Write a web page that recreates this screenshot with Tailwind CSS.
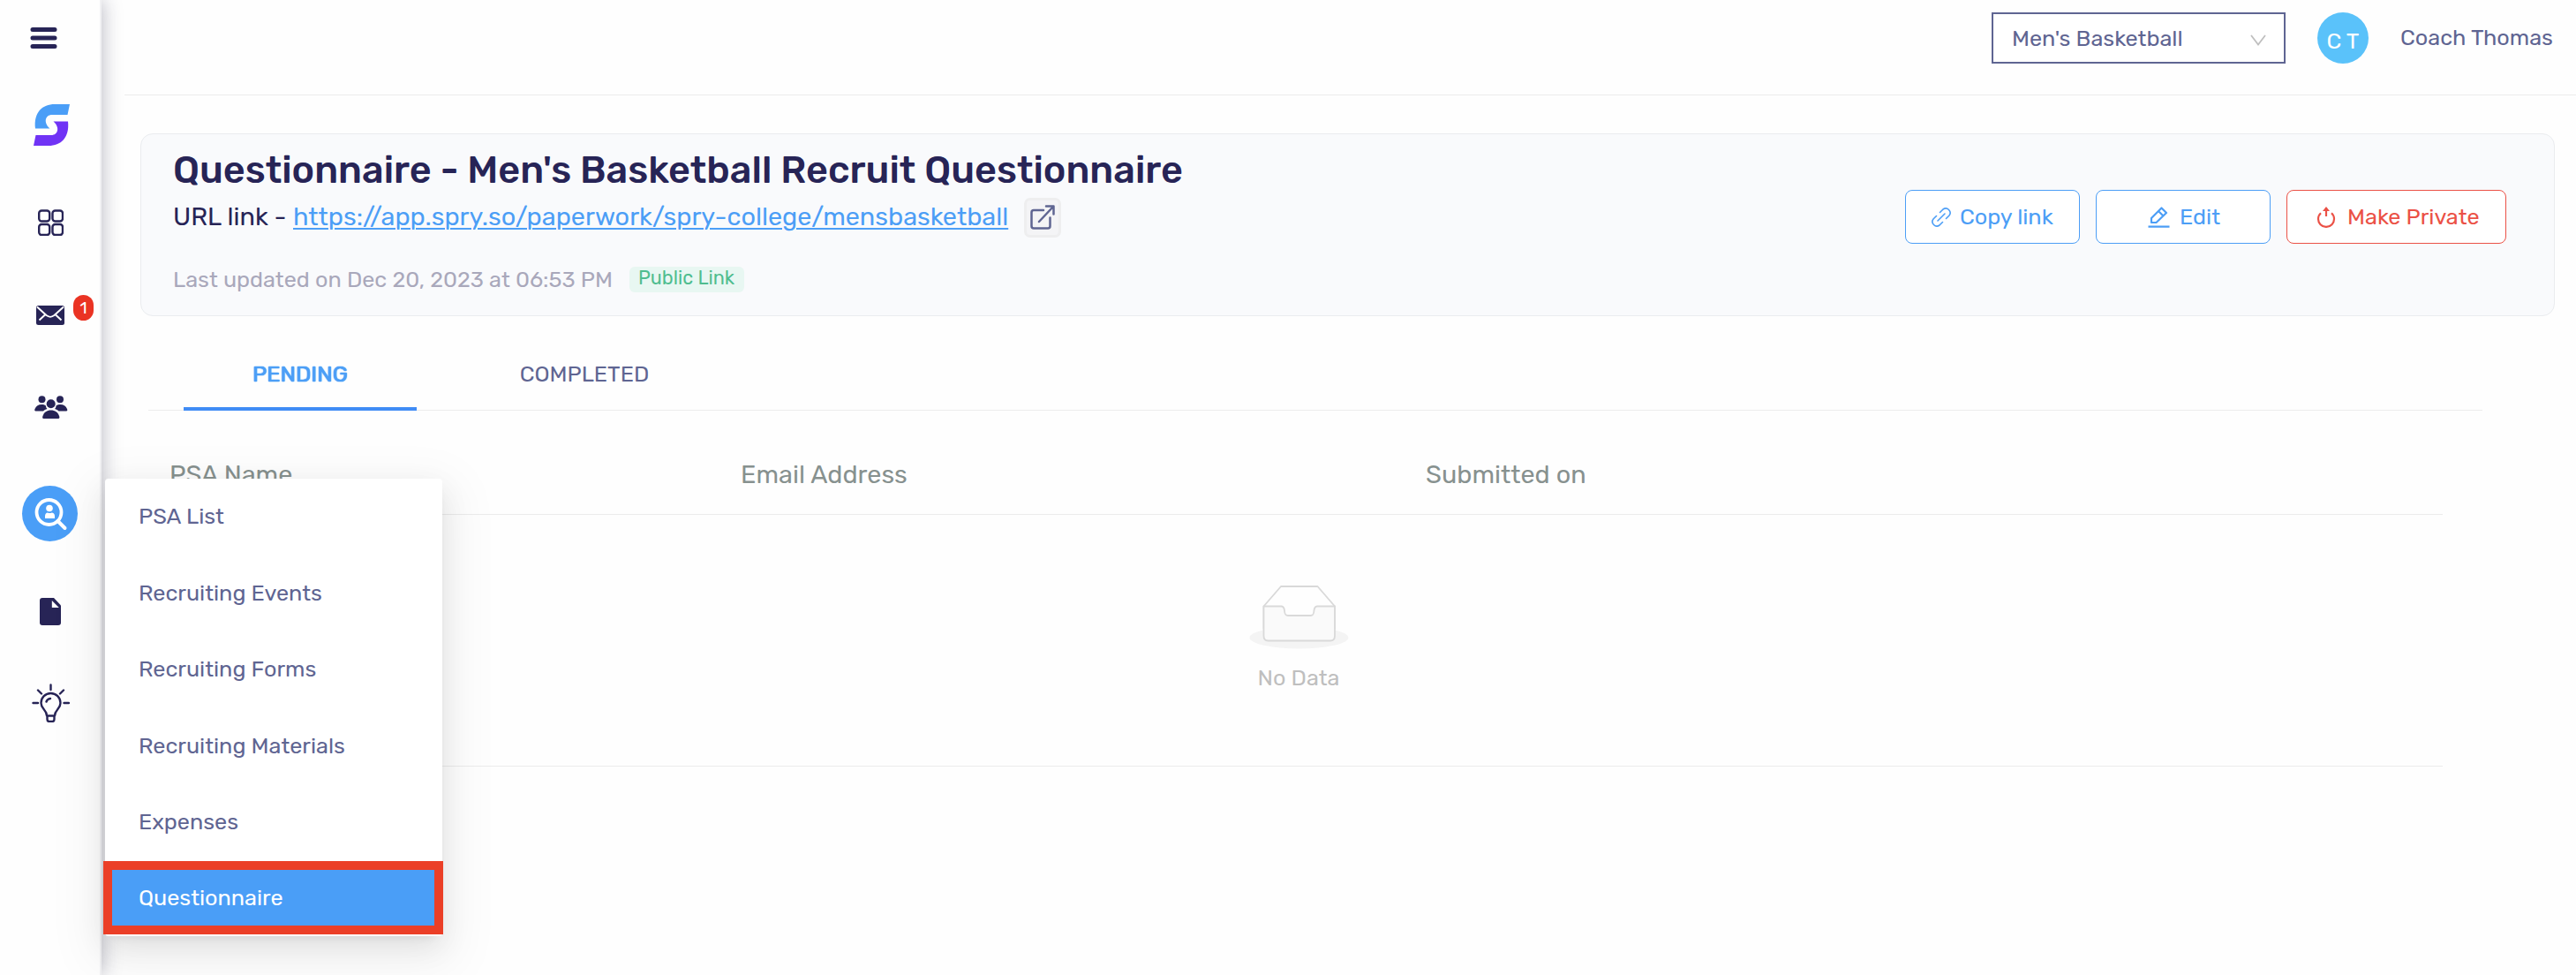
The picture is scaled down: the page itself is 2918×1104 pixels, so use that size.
<!DOCTYPE html>
<html lang="en">
<head>
    <meta charset="UTF-8">
    <title>Questionnaire</title>
    <script src="https://cdn.jsdelivr.net/npm/@tailwindcss/browser@4"></script>
</head>
<body class="relative flex w-[2918px] h-[1104px] overflow-hidden bg-[#fefefe] font-[Rubik,Roboto,sans-serif] text-[25.2px] leading-8 text-[#5f6592]">

    <!-- Sidebar -->
    <aside class="relative flex flex-col w-[115px] shrink-0 bg-[#fefefe] border-r-2 border-[#f1f1f3] shadow-[2px_0_20px_rgba(30,30,60,0.28)] text-[#272456]">
        <svg class="mt-[31px] ml-[34px] w-[31px] h-[24px]" viewBox="0 0 31 24" stroke="currentColor" stroke-width="5" stroke-linecap="round"><path d="M3 2.5h25M3 12h25M3 21.5h25"/></svg>
        <svg class="mt-[63px] ml-[38px] w-[41px] h-[47px]" viewBox="0 0 41 47">
            <path fill="#4a9ef7" d="M41 0H24C10 0 0 9 2 27.500H18.500C11 21 13 12 21 12H38.500Z"/>
            <path fill="#7033f5" d="M0 47H17C31 47 41 38 39 19.500H22.500C30 26 28 35 20 35H2.500Z"/>
        </svg>
        <svg class="mt-[72px] ml-[43px] w-[29px] h-[30px]" viewBox="0 0 29 30" fill="none" stroke="currentColor" stroke-width="2.400">
            <rect x="1.200" y="1.500" width="12" height="12" rx="3"/><rect x="16.500" y="1.500" width="11.500" height="12" rx="3"/>
            <rect x="1.200" y="17" width="12" height="12" rx="3"/><rect x="16.500" y="17" width="11.500" height="12" rx="3"/>
        </svg>
        <div class="relative mt-[79px] ml-[41px] w-8">
            <svg class="w-8 h-[22px]" viewBox="0 0 32 22"><rect width="32" height="22" rx="2.500" fill="currentColor"/><path d="M1 1.500L11.500 11C15 13.500 17 13.500 20.500 11L31 1.500M3.500 16.500L10.500 10M28.500 16.500L21.500 10" fill="none" stroke="#fff" stroke-width="2"/></svg>
            <span class="absolute left-[42px] -top-3 flex items-center justify-center w-[23px] h-[29px] rounded-full bg-[#ea3323] text-white text-[19px]">1</span>
        </div>
        <svg class="mt-[80px] ml-[39px] w-[38px] h-[26px]" viewBox="0 0 38 26" fill="currentColor">
            <circle cx="8.500" cy="4.300" r="4"/><circle cx="29" cy="4.300" r="4"/>
            <path d="M1.500 17.500C0 17.500 0 16.500 .5 15C2 11.500 4.500 10 8 10C10 10 11.500 10.300 13 11.500C13 13 13.500 14 14.500 15C12.500 15.500 11 16.500 10 17.500ZM36 17.500C37.500 17.500 37.500 16.500 37 15C35.500 11.500 33 10 29.500 10C27.500 10 26 10.300 24.500 11.500C24.500 13 24 14 23 15C25 15.500 26.500 16.500 27.500 17.500Z"/>
            <circle cx="18.700" cy="9.300" r="5"/>
            <path d="M10.500 26C9 26 9 24.500 9.300 23.500C11 18.500 14 16.500 18.700 16.500S26.500 18.500 28.200 23.500C28.500 24.500 28.500 26 27 26Z"/>
        </svg>
        <div class="mt-[76px] ml-[25px] flex items-center justify-center size-[63px] rounded-full bg-[#4a9ef7]">
            <svg class="size-[63px]" viewBox="0 0 63 63" fill="none" stroke="#fff">
                <circle cx="30.500" cy="30" r="14" stroke-width="3.800"/><path d="M40.500 40L48.500 48" stroke-width="4" stroke-linecap="round"/>
                <circle cx="31" cy="25.500" r="3.800" fill="#fff" stroke="none"/><path d="M26 37V34.500C26 32 27.500 30.500 29 30.500C30.500 31.300 32 31.300 33.500 30.500C35.500 30.500 37 32 37 34.500V37Z" fill="#fff" stroke="none"/>
            </svg>
        </div>
        <svg class="mt-[64px] ml-[45px] w-6 h-[31px]" viewBox="0 0 24 31"><path fill="currentColor" d="M3 0H16L24 8.500V28A3 3 0 0 1 21 31H3A3 3 0 0 1 0 28V3A3 3 0 0 1 3 0Z"/><path fill="#fff" d="M13.800 3V11H21.800Z"/></svg>
        <svg class="mt-[66px] ml-[36px] w-[43px] h-[44px]" viewBox="0 0 43 44" fill="none" stroke="currentColor" stroke-width="2.400" stroke-linecap="round" stroke-linejoin="round">
            <path d="M21.500 1.500V7M7 7.500L11 11.500M36 7.500L32 11.500M1.500 22H7M36.500 22H42M17 36.500C17 29.500 10.500 29 10.500 22A11 11 0 0 1 32.500 22C32.500 29 26 29.500 26 36.500ZM17.500 37V40.500Q17.500 43 20 43H23Q25.500 43 25.500 40.500V37M16.500 20.500Q17.500 17.500 21 17"/>
        </svg>
    </aside>

    <div class="flex flex-col grow">
        <!-- Top bar -->
        <header class="flex items-start justify-end h-[108px] ml-[26px] pt-[14px] pr-[27px] border-b border-[#ececec]">
            <div class="flex items-center justify-between w-[333px] h-[58px] border-2 border-[#5f6592] bg-white pl-[21px] pr-5">
                <span class="pb-px">Men's Basketball</span>
                <svg class="mt-1 w-[18px] h-[13px]" viewBox="0 0 18 13" fill="none" stroke="#bfbfbf" stroke-width="1.800"><path d="M1 1L9 11.500L17 1"/></svg>
            </div>
            <div class="ml-9 flex items-center justify-center size-[58px] rounded-full bg-[#5ac2fa] text-white pt-[5px]">C T</div>
            <span class="ml-[36px] w-[172px] pt-[12px] whitespace-nowrap">Coach Thomas</span>
        </header>

        <!-- Questionnaire summary -->
        <section class="flex justify-between mt-[43px] ml-[44px] mr-6 h-[207px] rounded-[14px] border border-[#eaecef] bg-[#f9fafc] pl-[36px] pr-[54px]">
            <div class="text-[#272456] whitespace-nowrap">
                <h1 class="mt-[15px] text-[43.2px] leading-[52px] font-medium">Questionnaire - Men's Basketball Recruit Questionnaire</h1>
                <div class="flex items-center mt-1 h-[46px] text-[28.8px]">
                    <span class="w-[136px] pb-0.5">URL link -</span>
                    <a class="w-[810px] pb-0.5 text-[#4c9ef6] underline decoration-2 underline-offset-[3px]">https://app.spry.so/paperwork/spry-college/mensbasketball</a>
                    <span class="ml-[18px] flex items-center justify-center w-[42px] h-[45px] rounded-[7px] border-[3px] border-[#eeeeef] bg-[#f4f4f6]">
                        <svg class="size-7 shrink-0" viewBox="0 0 28 28" fill="none" stroke="#5f6592" stroke-width="2.500" stroke-linecap="round" stroke-linejoin="round"><path d="M15 6H4Q1.500 6 1.500 8.500V24Q1.500 26.500 4 26.500H20Q22.500 26.500 22.500 24V14.500M18 1.500H26.500V10.500M26 2L10 19"/></svg>
                    </span>
                </div>
                <div class="flex items-start mt-[31px]">
                    <span class="w-[517px] text-[#a9a8bb]">Last updated on Dec 20, 2023 at 06:53 PM</span>
                    <span class="mt-0.5 flex items-center h-[29px] w-[130px] px-[10px] rounded-md bg-[#e8f7f2] text-[#4fbd8f] text-[21.6px] pb-1">Public Link</span>
                </div>
            </div>
            <div class="flex gap-[18px] mt-[63px] text-[#4c9ef6]">
                <button class="flex items-center w-[198px] h-[61px] rounded-lg border-[1.5px] border-[#4c9ef6] bg-white pl-7">
                    <svg class="size-6 mr-[9px]" viewBox="0 0 24 24" fill="none" stroke="currentColor" stroke-width="1.600" stroke-linecap="round"><path d="M8 16L16 8M10.500 6.500L14 3A5 5 0 0 1 21 10L17.500 13.500M13.500 17.500L10 21A5 5 0 0 1 3 14L6.500 10.500"/></svg>
                    <span class="pb-0.5 whitespace-nowrap">Copy link</span>
                </button>
                <button class="flex items-center w-[198px] h-[61px] rounded-lg border-[1.5px] border-[#4c9ef6] bg-white pl-[58px]">
                    <svg class="w-[25px] h-6 mr-[11px]" viewBox="0 0 25 24" fill="none" stroke="currentColor" stroke-width="2.200" stroke-linejoin="round"><path d="M.5 22.700H24.500M4 18V13L15.500 1.500L21 7L9.500 18ZM12 5L17.500 10.500"/></svg>
                    <span class="pb-0.5">Edit</span>
                </button>
                <button class="flex items-center w-[249px] h-[61px] rounded-lg border-[1.5px] border-[#eb5146] bg-white pl-[33px] text-[#eb5146]">
                    <svg class="w-[22px] h-6 mr-[13px]" viewBox="0 0 22 24" fill="none" stroke="currentColor" stroke-width="2.200"><path d="M5 7.200A9 9 0 1 0 17 7.200M11 11V3"/><path d="M11 0L15 5H7Z" fill="currentColor" stroke="none"/></svg>
                    <span class="pb-0.5 whitespace-nowrap">Make Private</span>
                </button>
            </div>
        </section>

        <!-- Tabs -->
        <nav class="flex mt-[31px] ml-[53px] mr-[106px] h-[76px] pl-10 border-b border-[#ececec]">
            <div class="flex justify-center w-[264px] h-[76px] pt-[18px] border-b-4 border-[#408cf5] text-[#4c9ef6] [text-shadow:0_0_1px_currentColor,0_0_1px_currentColor,0_0_1px_currentColor]">PENDING</div>
            <div class="flex justify-center w-[380px] pt-[18px]">COMPLETED</div>
        </nav>

        <!-- Submissions table -->
        <div class="ml-[53px] mr-[151px]">
            <div class="grid grid-cols-[647px_776px_1fr] mt-[52px] h-[66px] pl-[24px] border-b border-[#ececec] text-[28.8px] leading-10 text-[#87918f]">
                <span>PSA Name</span>
                <span>Email Address</span>
                <span>Submitted on</span>
            </div>
            <div class="flex flex-col items-center h-[285px] pt-[79px] pl-[7px] border-b border-[#ececec] text-[#bfbfbf]">
                <svg class="w-[113px] h-[73px]" viewBox="0 0 113 73">
                    <ellipse cx="56.500" cy="60" rx="56" ry="12.500" fill="#f4f4f4"/>
                    <g stroke="#d9d9d9" stroke-width="1.800" stroke-linejoin="round">
                        <path fill="#fefefe" d="M16.500 24.500L36 2H77.500L97 24.500V50H16.500Z"/>
                        <path fill="#fafafa" d="M16.500 24.500H36.500C43 25 37 35 44 35H69.500C76.500 35 70.500 25 77 24.500H97V58Q97 63.500 92 63.500H21.500Q16.500 63.500 16.500 58Z"/>
                    </g>
                </svg>
                <span class="mt-[16px]">No Data</span>
            </div>
        </div>
    </div>

    <!-- Recruiting submenu -->
    <ul class="absolute left-[119px] top-[542px] w-[382px] h-[518px] rounded bg-white pl-[38px] pt-[16px] shadow-[0_6px_12px_-8px_rgba(0,0,0,0.12),0_12px_32px_rgba(0,0,0,0.08),0_18px_56px_16px_rgba(0,0,0,0.05)]">
        <li class="h-[86.500px] pt-[10px]">PSA List</li>
        <li class="h-[86.500px] pt-[10px]">Recruiting Events</li>
        <li class="h-[86.500px] pt-[10px]">Recruiting Forms</li>
        <li class="h-[86.500px] pt-[10px]">Recruiting Materials</li>
        <li class="h-[71px] pt-[10px]">Expenses</li>
        <li class="-ml-[40px] w-[385px] h-[83px] border-[10px] border-[#eb3f27] bg-[#4a9ef7] pl-[30px] pt-[15px] text-white">Questionnaire</li>
    </ul>
</body>
</html>
